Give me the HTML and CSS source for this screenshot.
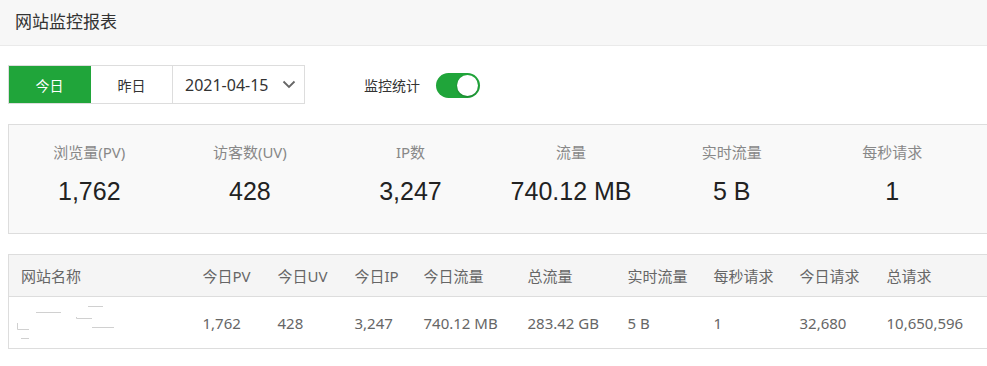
FILE: index.html
```html
<!DOCTYPE html>
<html lang="zh-CN">
  <head>
    <meta charset="utf-8" />
    <title>网站监控报表</title>
    <link rel="stylesheet" href="styles.css">
  </head>
  <body>
    <div class="topbar">网站监控报表</div>
    <div class="content">
      <div class="toolbar">
        <div class="btngroup">
          <span class="btn active">今日</span>
          <span class="btn">昨日</span>
          <span class="btn datebox">2021-04-15
            <svg class="chevron" width="14" height="9" viewBox="0 0 14 9"><path d="M1.5 1.5 L7 7 L12.5 1.5" fill="none" stroke="#666" stroke-width="1.8"/></svg>
          </span>
        </div>
        <label class="switchlabel">监控统计</label>
        <span class="switch on"><span class="knob"></span></span>
      </div>

      <div class="stats">
        <div class="stat"><div class="statname">浏览量(PV)</div><div class="statvalue">1,762</div></div>
        <div class="stat"><div class="statname">访客数(UV)</div><div class="statvalue">428</div></div>
        <div class="stat"><div class="statname">IP数</div><div class="statvalue">3,247</div></div>
        <div class="stat"><div class="statname">流量</div><div class="statvalue">740.12 MB</div></div>
        <div class="stat"><div class="statname">实时流量</div><div class="statvalue">5 B</div></div>
        <div class="stat"><div class="statname">每秒请求</div><div class="statvalue">1</div></div>
      </div>

      <table class="sitetable">
        <colgroup>
          <col style="width:182px"><col style="width:75px"><col style="width:77px"><col style="width:69px"><col style="width:104px">
          <col style="width:100px"><col style="width:86px"><col style="width:86px"><col style="width:87px"><col style="width:120px">
        </colgroup>
        <thead>
          <tr>
            <th>网站名称</th><th>今日PV</th><th>今日UV</th><th>今日IP</th><th>今日流量</th>
            <th>总流量</th><th>实时流量</th><th>每秒请求</th><th>今日请求</th><th>总请求</th>
          </tr>
        </thead>
        <tbody>
          <tr>
            <td class="sitename">
              <svg width="110" height="50" viewBox="0 0 110 50">
                <g fill="none" stroke="#d0d0d0" stroke-width="1">
                  <path d="M79 8.5 H94"/>
                  <path d="M27 14.5 H52"/>
                  <path d="M67.5 19 V20.5 H83"/>
                  <path d="M83 29.5 H105"/>
                  <path d="M8.5 25 V31.5 H20"/>
                  <path d="M12 40.5 H20"/>
                </g>
              </svg>
            </td>
            <td>1,762</td><td>428</td><td>3,247</td><td>740.12 MB</td>
            <td>283.42 GB</td><td>5 B</td><td>1</td><td>32,680</td><td>10,650,596</td>
          </tr>
        </tbody>
      </table>
    </div>
  </body>
</html>
```

FILE: styles.css
```css
html, body {
  margin: 0;
  padding: 0;
  overflow: hidden;
  background: #fff;
  font-family: "Noto Sans", "Noto Sans CJK SC", sans-serif;
  color: #333;
}
.topbar {
  height: 45px;
  line-height: 43px;
  padding-left: 15px;
  font-size: 17px;
  color: #333;
  background-color: #f7f7f7;
  border-bottom: 1px solid #eaeaea;
}
.content {
  padding: 19px 0 0 8px;
  width: 1010px;
}
.toolbar {
  display: flex;
  align-items: center;
  height: 39px;
}
.btngroup {
  display: flex;
  height: 39px;
  border: 1px solid #ddd;
  box-sizing: border-box;
}
.btn {
  display: flex;
  align-items: center;
  justify-content: center;
  width: 81px;
  font-size: 14px;
  color: #333;
  border-right: 1px solid #ddd;
}
.btn.active {
  background-color: #20a53a;
  color: #fff;
  border-right-color: #20a53a;
}
.datebox {
  width: 131px;
  border-right: none;
  justify-content: flex-start;
  padding-left: 12px;
  box-sizing: border-box;
  font-size: 16px;
}
.chevron {
  margin-left: 13px;
}
.switchlabel {
  margin-left: 59px;
  font-size: 14px;
  color: #333;
}
.switch {
  display: inline-block;
  position: relative;
  width: 44px;
  height: 25px;
  margin-left: 16px;
  margin-top: 2px;
  border-radius: 13px;
  background-color: #20a53a;
}
.knob {
  position: absolute;
  top: 2px;
  right: 2px;
  width: 21px;
  height: 21px;
  border-radius: 50%;
  background-color: #fff;
  box-shadow: 0 1px 2px rgba(0, 0, 0, 0.25);
}
.stats {
  display: grid;
  grid-template-columns: repeat(6, 160.6px);
  margin-top: 20px;
  height: 110px;
  box-sizing: border-box;
  border: 1px solid #ddd;
  background-color: #f9f9f9;
}
.stat {
  text-align: center;
  padding-top: 16px;
}
.statname {
  font-size: 15px;
  color: #888;
  line-height: 22px;
}
.statvalue {
  font-family: "Liberation Sans", Arial, sans-serif;
  font-size: 25px;
  color: #222;
  line-height: 30px;
  margin-top: 13px;
}
.sitetable {
  margin-top: 20px;
  table-layout: fixed;
  border-collapse: collapse;
  border: 1px solid #ddd;
  font-size: 15px;
  color: #666;
}
.sitetable th {
  text-align: left;
  font-weight: normal;
  height: 41px;
  padding: 0 0 0 12px;
  background-color: #f5f5f5;
  border-bottom: 1px solid #ddd;
}
.sitetable td {
  height: 51px;
  padding: 0 0 0 12px;
  white-space: nowrap;
}
.sitetable td.sitename {
  padding-left: 0;
}
.sitename svg {
  display: block;
}
```
